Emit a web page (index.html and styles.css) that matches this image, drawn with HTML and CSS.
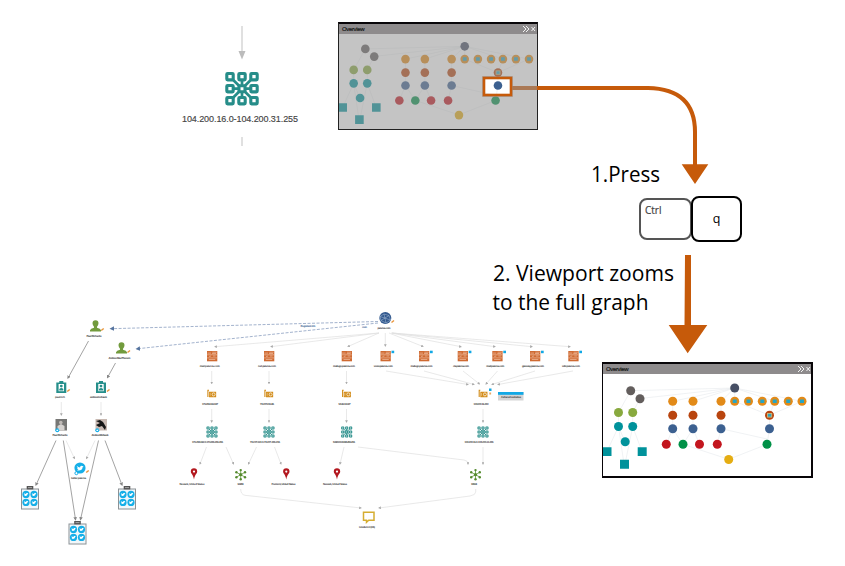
FILE: index.html
```html
<!DOCTYPE html>
<html lang="en">
<head>
<meta charset="utf-8">
<title>Viewport zoom</title>
<link rel="stylesheet" href="styles.css">
</head>
<body>
<main class="canvas">
<svg class="graph" width="845" height="566" viewBox="0 0 845 566">
<defs>
<g id="net"><path d="M-12-12L12 12M12-12L-12 12M0-14V14M-14 0H14" stroke="#268d89" stroke-width="2.7"/><g fill="#fff" stroke="#268d89" stroke-width="3.1"><rect x="-15.2" y="-15.2" width="6.400" height="6.400" rx=".8"/><rect x="-3.200" y="-15.2" width="6.400" height="6.400" rx=".8"/><rect x="8.800" y="-15.2" width="6.400" height="6.400" rx=".8"/><rect x="-15.2" y="-3.200" width="6.400" height="6.400" rx=".8"/><rect x="-3" y="-3" width="6" height="6" rx=".8"/><rect x="8.800" y="-3.200" width="6.400" height="6.400" rx=".8"/><rect x="-15.2" y="8.800" width="6.400" height="6.400" rx=".8"/><rect x="-3.200" y="8.800" width="6.400" height="6.400" rx=".8"/><rect x="8.800" y="8.800" width="6.400" height="6.400" rx=".8"/></g></g>
<g id="dom"><rect x="-5" y="-5" width="10.3" height="10.3" fill="#cf6a32"/><path d="M-4.6-2.9H-1M.3-3.8H4.6M0-2.5H4M-5-1.2H5M-3 .5L-1 0M1 0H3.6M-5 1.9H5M-3.2 3.5H3.3" stroke="#f5cbb2" stroke-width=".6" fill="none"/></g>
<g id="tag"><rect x="6" y="-5.3" width="2.7" height="2.5" fill="#12a8e5"/></g>
<g id="ip"><path d="M-4.1-4V3M-4.600-3.7H-3M-2.400-1.7H3.6V2.8H-2.4z" fill="#d28b17" stroke="#d28b17" stroke-width="1.1"/><circle cx="1.6" cy=".4" r="1.5" fill="#d28b17" stroke="#fff" stroke-width=".7"/><path d="M-1.8-1V1.8" stroke="#fff" stroke-width=".4"/></g>
<g id="pin"><path d="M0 5.5C-1-.2-3.2-.1-3.2-2.5A3.2 3.2 0 0 1 3.2-2.5C3.2-.1 1-.2 0 5.5Z" fill="#b3181f"/><circle cy="-2.4" r="1.1" fill="#fff"/></g>
<g id="hub" stroke="#62973b" fill="#568b2e"><path d="M0-4.7V4.7M-4.3-2.4L4.3 2.4M-4.3 2.4L4.3-2.4" stroke-width=".8"/><g stroke="none"><circle r="1.6"/><circle cy="-4.6" r="1.2"/><circle cy="4.6" r="1.2"/><circle cx="-4.3" cy="-2.5" r="1.2"/><circle cx="4.3" cy="-2.5" r="1.2"/><circle cx="-4.3" cy="2.5" r="1.2"/><circle cx="4.3" cy="2.5" r="1.2"/></g></g>
<g id="person"><path d="M-5.5 5.4V4.2Q-5 2.5-1.5 1.8V.7Q-3-1-3-2.7A3 3 0 0 1 3-2.7Q3-1 1.5.7V1.8Q5 2.5 5.5 4.2V5.4Z" fill="#729b3d"/></g>
<g id="pen"><path d="M-1.3 1L1.2-1" stroke="#e9953b" stroke-width="1.5"/></g>
<g id="badge"><path d="M-5-4.4H-2V-6H2V-4.4H5V6H-5Z" fill="#268f8b"/><path d="M-2.7-3H2.7V4.2H-2.7Z" fill="#fff"/><circle cy="-.9" r="1.4" fill="#268f8b"/><path d="M-2 3.5V2Q0 0 2 2V3.5Z" fill="#268f8b"/></g>
<g id="bird"><circle r="3.6" fill="#16afe8"/><path d="M-2.2-1.5Q-1-.4 0-.3Q.2-1.7 1.3-1.3L2.3-1.2L1.7-.5Q1.3 2.2-2 1.5L-1 .8L-2 .1L-1.5-.1Z" fill="#fff"/></g>
<g id="box"><rect x="-8.5" y="-9" width="17" height="20" fill="#f1f7fa" stroke="#8c9296" stroke-width="1"/><rect x="-3.3" y="-12" width="6.6" height="3.4" fill="#555"/><path d="M-2-10.4H2" stroke="#bbb" stroke-width=".8"/><use href="#bird" x="-4" y="-3.6"/><use href="#bird" x="4" y="-3.6"/><use href="#bird" x="-4" y="4.4"/><use href="#bird" x="4" y="4.4"/></g>
<marker id="m" viewBox="0 0 6 6" refX="4" refY="3" markerWidth="2.8" markerHeight="2.8" markerUnits="userSpaceOnUse" orient="auto"><path d="M0 0L6 3L0 6Z" fill="#aaa"/></marker>
<marker id="md" viewBox="0 0 6 6" refX="4" refY="3" markerWidth="3.6" markerHeight="3.6" markerUnits="userSpaceOnUse" orient="auto"><path d="M0 0L6 3L0 6Z" fill="#888"/></marker>
<marker id="mb" viewBox="0 0 6 6" refX="4" refY="3" markerWidth="4.5" markerHeight="4.5" markerUnits="userSpaceOnUse" orient="auto"><path d="M0 0L6 3L0 6Z" fill="#56749f"/></marker>
</defs>

<path d="M242 26V53M242 137V146" stroke="#d9d9d9" stroke-width="1.6"/>
<path d="M238.5 51H245.5L242 59.5Z" fill="#bcbcbc"/>
<use href="#net" x="242" y="88.7"/>
<text class="range" x="182" y="122" textLength="116">104.200.16.0-104.200.31.255</text>

<g class="owner"><path d="M378 321.5L111 328.7"/><path d="M378 323L137 348.8"/></g>
<g class="dark"><path d="M88.500 341L68 378"/><path d="M115.500 363L107.500 377.500"/><path d="M56 440.500L36 485"/><path d="M63.300 440.500L75.500 519.500"/><path d="M98.500 440.500L80.500 519.500"/><path d="M105 440.500L122 485"/></g>
<g class="link">
<path d="M61.300 402V415"/><path d="M101 402V415"/><path d="M66 440.500L74.500 458.500"/><path d="M95 440.500L86.500 458.500"/>
<path d="M379 333L215 346.700"/><path d="M379 333L271 346.700"/><path d="M379 333L348 346.500"/><path d="M385.300 333V346"/><path d="M389 333L423 346.500"/><path d="M391 333L461 346.700"/><path d="M392 333L495 346.700"/><path d="M392 333L532 346.700"/><path d="M392 333L570 346.700"/>
<path d="M211.700 371V383.500"/><path d="M269 371V383.500"/><path d="M346.500 371V383.500"/>
<path d="M386 371L468 384.500"/><path d="M424 371L474 384.500"/><path d="M463 371L479.500 384"/><path d="M497.500 371L486 384"/><path d="M535 371L492 384.500"/><path d="M573 371L498 384.500"/>
<path d="M211.700 409V422"/><path d="M269 409V422"/><path d="M346.500 409V422"/><path d="M483 409V422"/>
<path d="M206.500 447L200 464"/><path d="M226 447L233.500 464"/><path d="M256.500 447L248.500 464"/><path d="M274.500 447L281 464"/><path d="M344 447L340 464"/><path d="M358 447L464 460Q468 460.500 468 464"/><path d="M483 447V464"/>
<path d="M240.700 489Q240.700 494.500 245 495.300L361 508"/><path d="M475.700 489V492Q475.700 495 470 496L379 508"/>
</g>

<use href="#person" x="95.500" y="326"/><use href="#pen" x="102.500" y="329.500"/><use href="#person" x="121.500" y="348"/><use href="#pen" x="128.800" y="351.500"/>
<use href="#badge" x="61.300" y="387"/><use href="#pen" x="68.500" y="390.500"/><use href="#badge" x="101" y="387"/><use href="#pen" x="108.300" y="390.500"/>
<rect x="55.500" y="419" width="11.500" height="11.500" fill="#777775"/><path d="M57.500 430.500V426L61 424L64.500 426V430.500Z" fill="#d5d2cf"/><circle cx="60.800" cy="422.500" r="1.800" fill="#c0bbb7"/>
<rect x="95.500" y="419" width="11.500" height="11.500" fill="#c8b9b2"/><path d="M96 421L100 420L103 422L106 427L105 430L102 426L99 427L96 425L100 423Z" fill="#151515"/>
<use href="#bird" transform="translate(57.300 430.200) scale(.55)"/><use href="#bird" transform="translate(97.300 430.200) scale(.55)"/>
<use href="#bird" transform="translate(80 468) scale(1.55)"/><circle cx="76.400" cy="473.200" r="1.500" fill="#fff" stroke="#16afe8" stroke-width="1"/><use href="#pen" x="87.500" y="471.500"/>
<use href="#box" x="30" y="498"/><use href="#box" x="127" y="498"/><use href="#box" x="77.500" y="533"/>

<circle cx="385.300" cy="318" r="6" fill="#31588e"/><path d="M380 316.500L384 314L389 315.500L390.500 320L386 323L381 320.500ZM384 314L386 323M380 316.500L390.500 320M389 315.500L381 320.500" fill="none" stroke="#a4b9d3" stroke-width=".55"/><use href="#pen" x="392.800" y="321.500"/>
<use href="#dom" x="212" y="356"/><use href="#dom" x="269" y="356"/><use href="#dom" x="346.700" y="356"/><use href="#dom" x="385.500" y="356"/><use href="#dom" x="424" y="356"/><use href="#dom" x="462.700" y="356"/><use href="#dom" x="497.300" y="356"/><use href="#dom" x="535" y="356"/><use href="#dom" x="573.300" y="356"/>
<use href="#tag" x="385.500" y="356"/><use href="#tag" x="424" y="356"/><use href="#tag" x="462.700" y="356"/><use href="#tag" x="497.300" y="356"/><use href="#tag" x="535" y="356"/><use href="#tag" x="573.300" y="356"/>
<use href="#ip" x="212" y="394"/><use href="#ip" x="269" y="394"/><use href="#ip" x="346.700" y="394"/><use href="#ip" x="483.300" y="394"/><rect x="489" y="388.500" width="2.500" height="2.500" fill="#12a8e5"/><rect x="489.300" y="392.500" width="1.800" height="2" fill="#e9a760"/>
<use href="#net" transform="translate(212 432) scale(.33)"/><use href="#net" transform="translate(269 432) scale(.33)"/><use href="#net" transform="translate(346.700 432) scale(.33)"/><use href="#net" transform="translate(483 432) scale(.33)"/>
<use href="#pin" x="194" y="474"/><use href="#pin" x="286.300" y="474"/><use href="#pin" x="337" y="474"/><use href="#hub" x="240.700" y="474.700"/><use href="#hub" x="475.500" y="474.700"/>
<path d="M363.500 512.200H374V520.300H368.700L366.500 522.300V520.300H363.500Z" fill="#fff" stroke="#d5ad31" stroke-width="1.500"/>
<rect x="498" y="392" width="25.500" height="8.500" fill="#d5d5d5"/><rect x="498" y="392" width="25.500" height="2.800" fill="#12a8e5"/>

<g class="label">
<text x="94" y="337" textLength="15">Paul Richards</text><text x="119.500" y="359" textLength="22">Andrew MacPherson</text>
<text x="60" y="397.500" textLength="10">paulrich</text><text x="98.500" y="397.500" textLength="17">andrewmohawk</text>
<text x="60" y="435.500" textLength="15">Paul Richards</text><text x="100" y="435.500" textLength="17">Andrew Mohawk</text><text x="78.500" y="479" textLength="15">twitter paterva</text>
<text x="384" y="328.800" textLength="13">paterva.com</text><text x="308" y="327" textLength="15" class="blue">Registrant info</text><text x="364.500" y="327.500" textLength="5" class="blue">own</text>
<text x="209.700" y="367.300" textLength="20">mail.paterva.com</text><text x="267" y="367.300" textLength="18">ns1.paterva.com</text><text x="344" y="367.300" textLength="22">maltego.paterva.com</text><text x="383.300" y="367.300" textLength="19">www.paterva.com</text><text x="421.500" y="367.300" textLength="22">maltego.paterva.com</text><text x="461" y="367.300" textLength="16">cta.paterva.com</text><text x="495.300" y="367.300" textLength="18">mail.paterva.com</text><text x="533" y="367.300" textLength="22">gateway.paterva.com</text><text x="571" y="367.300" textLength="18">wiki.paterva.com</text>
<text x="210" y="405" textLength="16">173.255.193.197</text><text x="267" y="405" textLength="14">74.207.243.85</text><text x="344.500" y="405" textLength="12">54.83.59.97</text><text x="481" y="405" textLength="15">104.200.16.250</text>
<text x="207.500" y="443" textLength="31">173.255.192.0-173.255.255.255</text><text x="265" y="443" textLength="30">74.207.224.0-74.207.255.255</text><text x="344" y="443" textLength="22">54.80.0.0-54.95.255.255</text><text x="479" y="443" textLength="29">104.200.16.0-104.200.31.255</text>
<text x="192" y="485" textLength="25">Newark, United States</text><text x="240.500" y="485" textLength="6">63949</text><text x="283.500" y="485" textLength="24">Fremont, United States</text><text x="335" y="485" textLength="24">Newark, United States</text><text x="474" y="485" textLength="6">14618</text><text x="367" y="528" textLength="16">Linode LLC (US)</text><text x="511" y="397.700" textLength="20">4 shared websites</text>
</g>

<g class="step"><text x="591" y="182" textLength="69" lengthAdjust="spacingAndGlyphs">1.Press</text><text x="493" y="281" textLength="181" lengthAdjust="spacingAndGlyphs">2. Viewport zooms</text><text x="492.500" y="310" textLength="156" lengthAdjust="spacingAndGlyphs">to the full graph</text></g>
</svg>

<section class="panel panel-top">
<header class="bar"><span class="title">Overview</span><svg width="14" height="8" viewBox="0 0 14 8"><path d="M1 1L4 4L1 7M4 1L7 4L4 7M9.500 2L13 6M13 2L9.500 6"/></svg></header>
<svg class="map" viewBox="602.100 375.200 209.300 99.800" preserveAspectRatio="none"><use href="#minimap"/></svg>
<svg class="shade" width="200" height="108" viewBox="338 22 200 108"><path d="M339 34H537V129H339ZM483 77V96H512V77Z" fill="#949494" fill-opacity=".55" fill-rule="evenodd"/></svg>
</section>

<section class="panel panel-bottom">
<header class="bar"><span class="title">Overview</span><svg width="14" height="8" viewBox="0 0 14 8"><path d="M1 1L4 4L1 7M4 1L7 4L4 7M9.500 2L13 6M13 2L9.500 6"/></svg></header>
<svg class="map" viewBox="602 374 211 104" preserveAspectRatio="none">
<defs><g id="minimap">
<path d="M734.700 388L630.700 390.700L618.500 412.500V426.500L607 451.500M734.700 388L640 398.500L632.700 412.500V426.500L642 451.500M618.500 426.500L625 441.700M632.700 426.500L625 464M618.500 426.500L624 464M734.700 388L672.700 401.300V428.700L666.300 444.300M734.700 388L693 401.300V428.700L699.500 444.300M672.700 428.700L683 444.300L693 428.700M734.700 388L721 401.300V428.700L717.300 444.300M721 428.700L767 439V444.300L728.700 459.300L683 444.300M734.700 388L802 401.300L769.500 415.300L734.700 401.300M734.700 388V401.300M734.700 388L774.700 401.300L769.500 415.300V428.700L767 444.300" fill="none" stroke="#e6eaec" stroke-width=".6"/>
<g fill="#635e5d"><circle cx="630.700" cy="390.700" r="4.500"/><circle cx="640" cy="398.700" r="4.500"/></g><circle cx="734.700" cy="388" r="4.500" fill="#474f65"/>
<g fill="#88a93e"><circle cx="618.500" cy="412.500" r="4.500"/><circle cx="632.700" cy="412.500" r="4.500"/></g>
<g fill="#00929b"><circle cx="618.500" cy="426.500" r="4.500"/><circle cx="632.700" cy="426.500" r="4.500"/><circle cx="625.200" cy="441.700" r="4.500"/><path d="M602.500 447.200H611.500V456H602.500ZM637.700 447.200H646.700V456H637.700ZM620 459.700H629V468.700H620Z"/></g>
<g fill="#e28a18"><circle cx="672.700" cy="401.300" r="4.500"/><circle cx="693" cy="401.300" r="4.500"/><circle cx="721" cy="401.300" r="4.500"/><circle cx="734.700" cy="401.300" r="4.500"/><circle cx="748.500" cy="401.300" r="4.500"/><circle cx="762.300" cy="401.300" r="4.500"/><circle cx="774.700" cy="401.300" r="4.500"/><circle cx="788.300" cy="401.300" r="4.500"/><circle cx="802" cy="401.300" r="4.500"/></g>
<g fill="#b9450f"><circle cx="672.700" cy="415.300" r="4.500"/><circle cx="693" cy="415.300" r="4.500"/><circle cx="721" cy="415.300" r="4.500"/><circle cx="769.500" cy="415.300" r="4.500"/></g>
<path d="M732.700 399.500H736.700V403H732.700ZM746.500 399.500H750.500V403H746.500ZM760.300 399.500H764.300V403H760.300ZM772.700 399.500H776.700V403H772.700ZM786.300 399.500H790.300V403H786.300ZM800 399.500H804V403H800Z" fill="#28a5c4"/><rect x="767.500" y="413.500" width="4.200" height="3.600" fill="#28a5c4" stroke="#c9b77a" stroke-width=".9"/>
<g fill="#3c6090"><circle cx="672.700" cy="428.700" r="4.500"/><circle cx="693" cy="428.700" r="4.500"/><circle cx="721" cy="428.700" r="4.500"/><circle cx="769.500" cy="428.700" r="4.500"/></g>
<g fill="#c3161e"><circle cx="666.300" cy="444.300" r="4.500"/><circle cx="699.500" cy="444.300" r="4.500"/><circle cx="717.300" cy="444.300" r="4.500"/></g><g fill="#009147"><circle cx="683" cy="444.300" r="4.500"/><circle cx="767" cy="444.300" r="4.500"/></g><circle cx="728.700" cy="459.500" r="4.500" fill="#e5ad12"/>
</g></defs><use href="#minimap"/></svg>
</section>

<svg class="callout" width="845" height="566" viewBox="0 0 845 566">
<rect x="483.800" y="77.800" width="27.400" height="17.400" fill="none" stroke="#c65a0a" stroke-width="3"/>
<path d="M512 88H648Q695 89 695 132V167" fill="none" stroke="#c65a0a" stroke-width="4"/>
<path d="M681.700 164.300H708.300L695 184ZM685 255H691V325H707.300L687.700 353.300L668.700 325H684.500Z" fill="#c65a0a"/>
</svg>

<div class="key ctrl">Ctrl</div>
<div class="key q">q</div>
</main>
</body>
</html>
```
FILE: styles.css
```css
body { margin: 0; background: #fff; }
.canvas { position: relative; width: 845px; height: 566px; overflow: hidden; font-family: "Liberation Sans", sans-serif; }
.graph { display: block; }
.callout { position: absolute; left: 0; top: 0; }
.range { font-size: 9px; fill: #444; stroke: #444; stroke-width: .15; }
.step { font-family: "Open Sans", sans-serif; font-size: 21.3px; fill: #000; }
.label { font-size: 2.8px; font-weight: bold; fill: #444; text-anchor: middle; text-rendering: geometricPrecision; }
.label .blue { fill: #48699a; }
.link path { fill: none; stroke: #e0e0e0; stroke-width: .7; marker-end: url(#m); }
.dark path { fill: none; stroke: #999; stroke-width: .9; marker-end: url(#md); }
.owner path { fill: none; stroke: #8ba0c0; stroke-width: .8; stroke-dasharray: 3 1.5; marker-end: url(#mb); }
.panel { position: absolute; display: flex; flex-direction: column; box-sizing: border-box; background: #fff; overflow: hidden; }
.panel-top { left: 338px; top: 22px; width: 200px; height: 108px; }
.panel-bottom { left: 602px; top: 362px; width: 211px; height: 116px; }
.panel::after { content: ""; position: absolute; inset: 0; border: 1px solid #222; border-top: 2px solid #080508; }
.panel-bottom::after { border-width: 2px 2px 2px 1px; border-color: #080508; }
.bar { height: 12px; flex: none; box-sizing: border-box; padding: 2px 2px 0 4px; display: flex; align-items: center; justify-content: space-between; background: #8e8b8c; }
.title { font-size: 6px; line-height: 8px; letter-spacing: -.35px; color: #171717; -webkit-text-stroke: .2px #171717; }
.bar path { fill: none; stroke: #fff; stroke-width: .9; }
.map { display: block; width: 100%; flex: 1; min-height: 0; }
.shade { position: absolute; left: 0; top: 0; z-index: 1; }
.key { position: absolute; box-sizing: border-box; border-radius: 8px; background: #fff; }
.ctrl { left: 639px; top: 198px; width: 53px; height: 42px; border: 2px solid #555; padding: 4px 0 0 4px; font: 10px/12px "Open Sans", sans-serif; color: #444; -webkit-text-stroke: .2px #444; }
.q { left: 691px; top: 196px; width: 51px; height: 46px; border: 2px solid #000; display: flex; align-items: center; justify-content: center; font: 12.5px/16px "Open Sans", sans-serif; color: #000; }
```
